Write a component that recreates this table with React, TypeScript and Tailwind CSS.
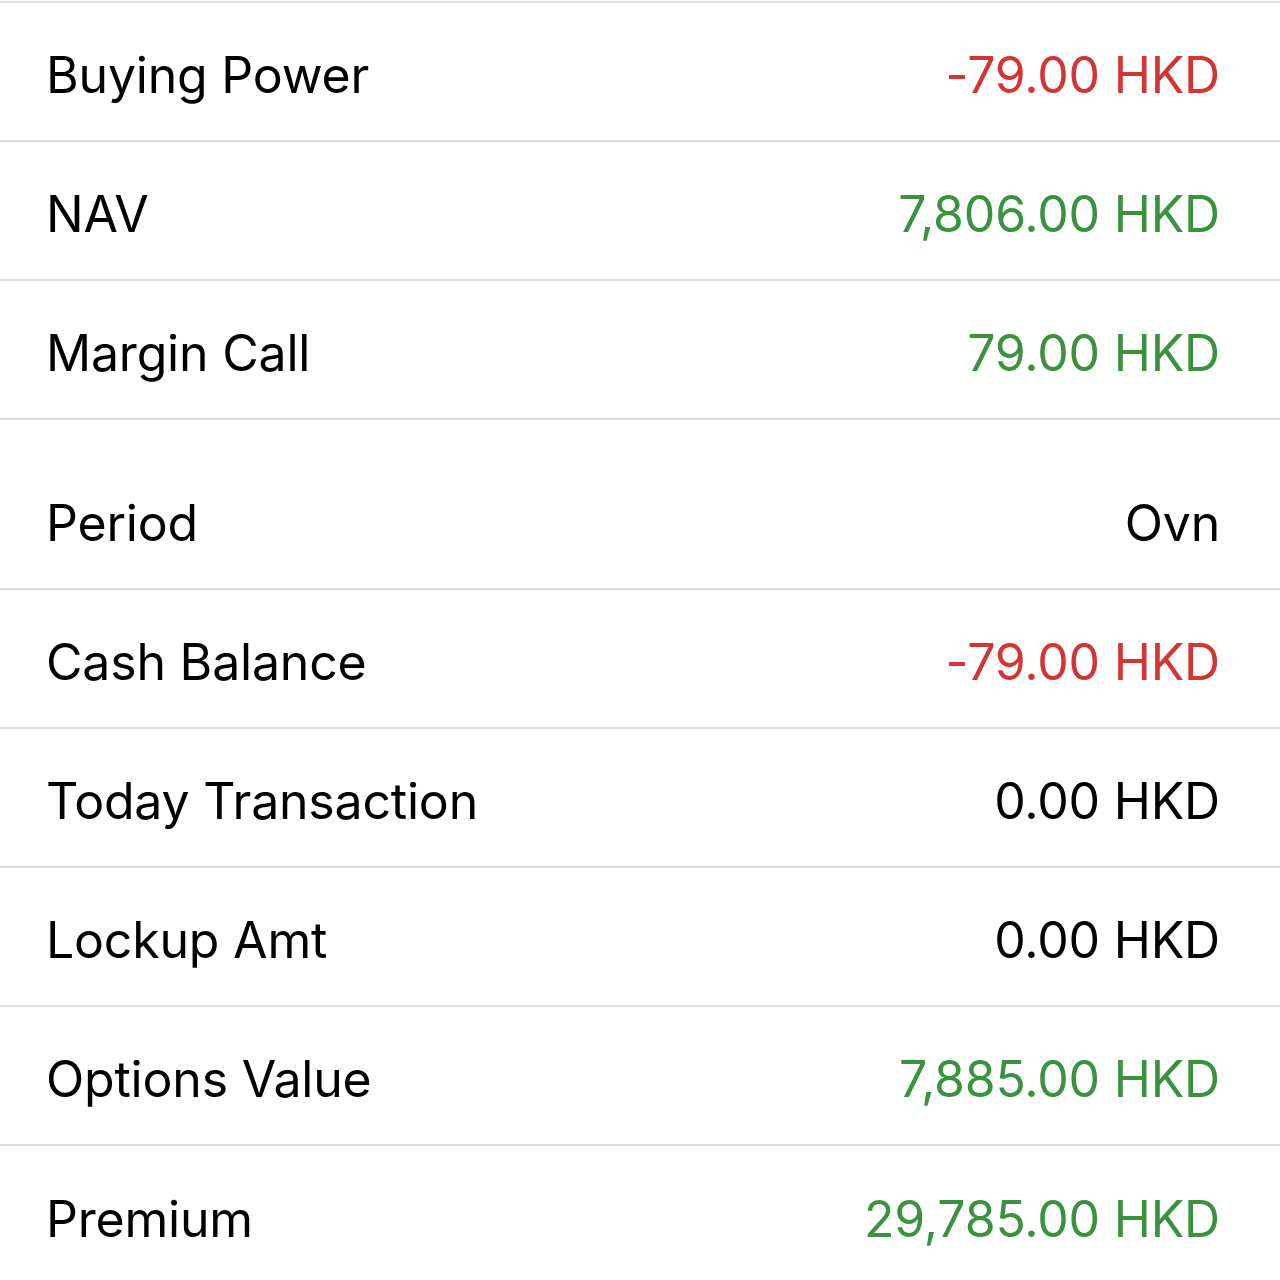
const rowsTop = [
  { label: "Buying Power", value: "-79.00 HKD", tone: "red" },
  { label: "NAV", value: "7,806.00 HKD", tone: "green" },
  { label: "Margin Call", value: "79.00 HKD", tone: "green" },
];

const rowsBottom = [
  { label: "Period", value: "Ovn", tone: "black" },
  { label: "Cash Balance", value: "-79.00 HKD", tone: "red" },
  { label: "Today Transaction", value: "0.00 HKD", tone: "black" },
  { label: "Lockup Amt", value: "0.00 HKD", tone: "black" },
  { label: "Options Value", value: "7,885.00 HKD", tone: "green" },
  { label: "Premium", value: "29,785.00 HKD", tone: "green" },
];

const toneClass: Record<string, string> = {
  red: "text-[#d33434]",
  green: "text-[#3a923f]",
  black: "text-black",
};

type Row = { label: string; value: string; tone: string };

const Item = ({ row, last }: { row: Row; last?: boolean }) => (
  <div
    className={`flex h-[139px] items-center justify-between pl-[46px] pr-[60px] pt-[8px] ${
      last ? "" : "border-b-2 border-[#dcdcdc]"
    }`}
  >
    <span className="text-black">{row.label}</span>
    <span className={toneClass[row.tone]}>{row.value}</span>
  </div>
);

export default function App() {
  return (
    <div className="min-h-screen bg-white pt-px font-['Inter',sans-serif] text-[50px] tracking-[-0.2px]">
      <div className="border-t-2 border-[#dcdcdc]">
        {rowsTop.map((r) => (
          <Item key={r.label} row={r} />
        ))}
      </div>
      <div className="h-[31px]" />
      <div>
        {rowsBottom.map((r, i) => (
          <Item key={r.label} row={r} last={i === rowsBottom.length - 1} />
        ))}
      </div>
    </div>
  );
}
